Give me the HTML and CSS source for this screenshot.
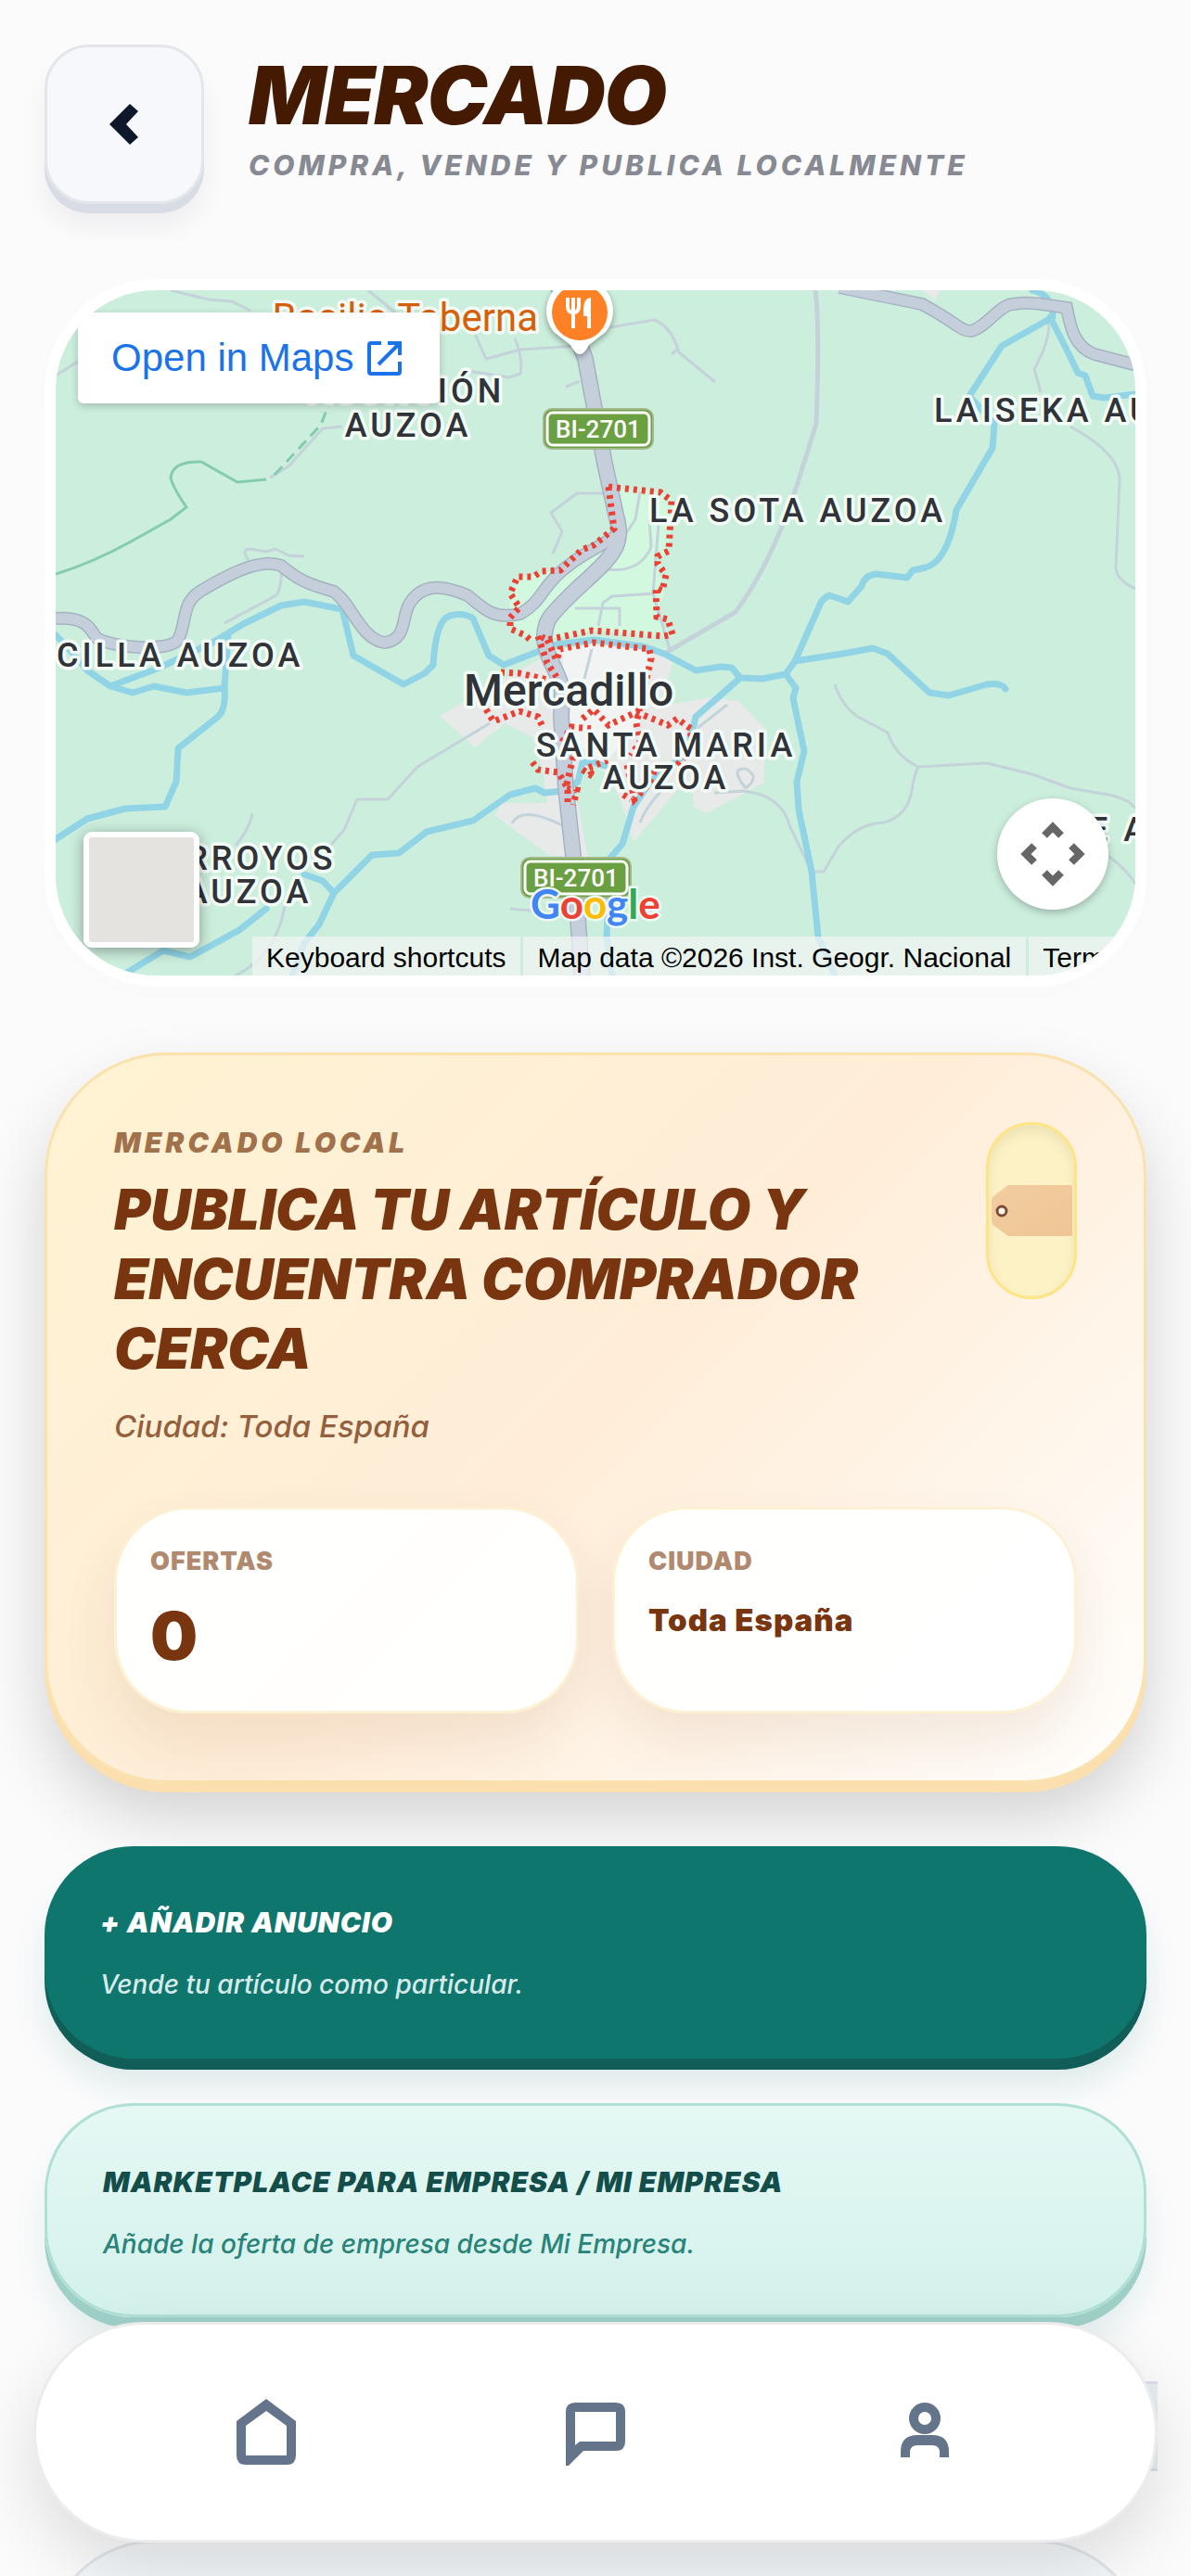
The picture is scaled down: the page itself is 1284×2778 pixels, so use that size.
FILE: index.html
```html
<!DOCTYPE html>
<html lang="es">
<head>
<meta charset="utf-8">
<meta name="viewport" content="width=device-width, initial-scale=1">
<title>Mercado</title>
<link rel="stylesheet" href="styles.css">
</head>
<body>
<div class="page">
  <header class="header">
    <button class="back" type="button" aria-label="Volver">
      <svg width="32" height="46" viewBox="0 0 32 46" aria-hidden="true"><path d="M22 1 31 9 18 23 31 37 22 45 0 23Z"/></svg>
    </button>
    <div class="heading">
      <h1>MERCADO</h1>
      <p>COMPRA, VENDE Y PUBLICA LOCALMENTE</p>
    </div>
  </header>

  <section class="map" aria-label="Mapa">
    <svg class="map-canvas" viewBox="60 313 1164 739" preserveAspectRatio="xMidYMid slice">
      <rect x="0" y="250" width="1400" height="900" fill="#cceedd"/>
      <path fill="#d2f9e0" d="M656 527 712 530 727 540 720 592 708 608 716 640 707 665 725 686 640 680 590 690 570 690 548 668 550 640 562 622 600 615 662 578Z"/>
      <g fill="#e8e9e9">
        <path d="M474 772 530 740 600 700 720 700 726 712 710 762 766 752 796 756 824 784 824 844 762 877 747 870 747 852 730 852 683 908 668 860 640 815 620 850 634 926 592 922 534 880 540 866 590 866 585 830 574 795 545 780 512 806Z"/>
        <path fill="#f2f3f3" d="M606 700 640 695 702 702 698 730 690 780 650 825 620 800 610 760Z"/>
        <path d="M994 313H1013L1008 324Z"/>
      </g>
      <path fill="#cceedd" d="M622 848 640 822 662 850 668 906 634 922Z"/>
      <g class="lane">
        <path d="M184 313 225 323 250 325 270 335M397 313 426 337M512 360 524 387 561 377 622 373M555 365Q564 385 561 403 L549 407 504 400M610 417 625 411"/>
        <path d="M652 532H622L594 553 606 573 596 597M270 607Q258 592 270 592L287 595 297 592 311 599 328 600M303 617Q304 632 298 642 L242 672"/>
        <path d="M369 460 348 462 311 503 291 515M60 405 84 390"/>
        <path d="M658 353 705 345Q724 352 732 380L771 412M732 375 724 382"/>
        <path d="M1131 347Q1131 370 1115 398L1122 423M1154 460Q1209 490 1207 520 L1203 610Q1202 625 1224 635"/>
        <path d="M900 738Q908 762 925 773L957 790Q965 815 990 827L1064 823 1113 835 1154 850 1195 857Q1218 862 1224 872M990 827Q984 840 983 853 978 880 953 887 925 888 904 913L888 940H875L851 890Q843 858 802 853L770 855"/>
        <path d="M528 780 450 827 418 862H385L371 895 356 912M272 877Q270 892 254 912M307 977Q298 1030 254 1052M1195 923Q1215 938 1224 953M550 980 574 982M552 888Q562 868 606 890"/>
        <path d="M690 530 685 560 672 580M700 560 702 590Q690 618 655 614M710 565 704 640 722 700M645 675 650 650 660 643 706 640M620 656H668V675M638 700 630 732M784 760 752 785M804 850Q786 828 804 829 820 838 804 850M716 850Q696 870 690 887"/>
      </g>
      <path class="lane wide" d="M879 313Q884 350 880 457L857 530Q830 610 793 660 L716 705"/>
      <g class="river">
        <path d="M1113 313Q1135 318 1135 342L1080 373 1045 427 1072 457 1070 483 1031 550Q1022 605 998 612L984 615 978 623 945 619Q932 620 929 632 L914 649Q904 645 894 642 886 646 884 652L857 713 847 727 822 732 798 731 789 720 777 719 750 723 716 705 693 697 640 690 600 695 543 717 527 707 510 667Q500 660 485 664 470 668 467 717L458 726 435 738 381 707 369 657 328 649 303 653 262 673 229 693 172 720 119 740"/>
        <path d="M60 685Q75 700 94 723L119 740 143 747 166 740 201 747 242 742M246 687 242 740Q244 765 235 773L192 807 190 843 178 870 135 872 94 883 60 905"/>
        <path d="M857 713 908 705 941 699 957 705 1002 747 1023 750 1064 738Q1080 736 1084 743M847 727 858 742 855 753 867 810 859 843 861 873 875 940 882 1010 900 1052"/>
        <path d="M798 731 773 753 750 773 746 790 738 815 703 840 683 870 671 910 658 925 654 1010 660 1052M652 826 640 822H628L623 843 607 853 587 855 577 850 550 857 527 873 510 885 460 897 430 920 401 922 360 963 344 997 328 1017 315 1052M328 943 348 950 360 963"/>
        <path d="M135 1050 176 1025 205 1032 258 1003 287 980M1132 342 1150 377 1162 402 1170 405 1178 427 1191 429 1224 425"/>
      </g>
      <g>
        <g class="road-edge">
          <path d="M60 667C95 665 98 680 104 688 120 698 180 704 192 690 202 670 195 650 217 637 240 623 262 613 274 610 285 607 295 607 303 610 318 622 325 628 360 638 380 652 388 688 414 693 440 690 432 665 442 650 455 630 475 630 504 642 525 660 535 668 561 662 590 645 580 630 627 600L666 577"/>
          <path d="M905 310 994 328C1030 347 1035 357 1047 357 1065 352 1078 328 1092 328 1110 325 1125 328 1150 332 1154 353 1158 374 1180 382L1230 395"/>
          <path class="main" d="M598 300 631 387 652 500 664 555C674 590 660 600 620 637 590 666 587 670 587 690 590 715 604 725 606 745L605 773 610 850 618 923 628 1060"/>
        </g>
        <g class="road">
          <path d="M60 667C95 665 98 680 104 688 120 698 180 704 192 690 202 670 195 650 217 637 240 623 262 613 274 610 285 607 295 607 303 610 318 622 325 628 360 638 380 652 388 688 414 693 440 690 432 665 442 650 455 630 475 630 504 642 525 660 535 668 561 662 590 645 580 630 627 600L666 577"/>
          <path d="M905 310 994 328C1030 347 1035 357 1047 357 1065 352 1078 328 1092 328 1110 325 1125 328 1150 332 1154 353 1158 374 1180 382L1230 395"/>
          <path class="main" d="M598 300 631 387 652 500 664 555C674 590 660 600 620 637 590 666 587 670 587 690 590 715 604 725 606 745L605 773 610 850 618 923 628 1060"/>
        </g>
      </g>
      <path class="trail" d="M60 619Q100 607 143 583L184 560 201 547Q186 525 184 515 186 497 217 498L256 520 287 517"/>
      <path class="trail" stroke-dasharray="12 7" d="M296 512 346 458 354 437"/>
      <g class="border">
        <path d="M656 525 712 531 724 540 721 594 709 600 709 608 718 620 714 637 707 634 708 665 720 668 725 684 716 686 638 680 590 690 584 687M656 525 662 570 640 588 627 593 604 615 584 616 575 622 558 622 550 640 560 655 550 666 550 678 566 685 574 692"/>
        <path d="M580 686 590 715 600 730M590 690 600 712 604 700 640 693 700 700 702 710 686 780 690 800 680 815M540 725 560 726 590 733M524 765 532 778 560 767 580 773 586 786M606 800 616 784 640 786M574 822 580 830 602 833 612 850 612 868M618 816 610 850 622 852 618 868M628 775 640 765 656 782 686 768 720 782 730 775 745 786 744 810 730 825M628 830 640 838 634 828 655 820M676 825 684 862 700 845 710 820M672 857 680 862"/>
      </g>
      <g class="sign">
        <rect x="586" y="441" width="118" height="43" rx="9"/><rect class="inner" x="590" y="445" width="110" height="35" rx="6"/>
        <text x="599" y="472">BI-2701</text>
        <rect x="562" y="925" width="118" height="43" rx="9"/><rect class="inner" x="566" y="929" width="110" height="35" rx="6"/>
        <text x="575" y="956">BI-2701</text>
      </g>
      <g class="label">
        <text x="439" y="434" text-anchor="middle">ASUNCIÓN</text>
        <text x="440" y="471" text-anchor="middle">AUZOA</text>
        <text x="700" y="563">LA SOTA AUZOA</text>
        <text x="1007" y="455">LAISEKA AUZOA</text>
        <text x="61" y="719">CILLA AUZOA</text>
        <text x="268" y="938" text-anchor="middle">ARROYOS</text>
        <text x="268" y="974" text-anchor="middle">AUZOA</text>
        <text x="1174" y="907">E AUZOA</text>
        <text x="718" y="816" text-anchor="middle">SANTA MARIA</text>
        <text x="718" y="851" text-anchor="middle">AUZOA</text>
        <text class="town" x="500" y="761">Mercadillo</text>
        <text class="place" x="580" y="357" text-anchor="end">Basilio Taberna</text>
      </g>
      <path class="pin" d="M625 382Q620 382 615 372L597 358A36 36 0 1 1 653 358L635 372Q630 382 625 382Z"/>
      <circle cx="625" cy="337" r="30" fill="#ff8126"/>
      <path fill="none" stroke="#fff" stroke-width="4" d="M612 321V330Q612 337 618 337T624 330V321M618 321V354"/>
      <path fill="#fff" d="M637 354H633V341H629V332Q630 321 637 321Z"/>
      <text class="google" x="572" y="991"><tspan fill="#4285f4">G</tspan><tspan fill="#ea4335">o</tspan><tspan fill="#fbbc04">o</tspan><tspan fill="#4285f4">g</tspan><tspan fill="#34a853">l</tspan><tspan fill="#ea4335">e</tspan></text>
    </svg>
    <a class="open-maps" href="#">Open in Maps
      <svg width="37" height="37" viewBox="0 0 37 37" aria-hidden="true"><path d="M15 2H4Q2 2 2 4V33Q2 35 4 35H33Q35 35 35 33V22M22 2H35V15M35 2 12 25"/></svg>
    </a>
    <button class="layer" type="button" aria-label="Capas"></button>
    <button class="pan" type="button" aria-label="Mover el mapa">
      <svg width="72" height="72" viewBox="0 0 72 72" aria-hidden="true"><path d="M27 16 36 7 45 16M27 56 36 65 45 56M16 27 7 36 16 45M56 27 65 36 56 45"/></svg>
    </button>
    <div class="credits"><button type="button">Keyboard shortcuts</button><span>Map data ©2026 Inst. Geogr. Nacional</span><a href="#">Terms</a></div>
  </section>

  <section class="hero">
    <div class="hero-top">
      <div class="hero-text">
        <p class="eyebrow">MERCADO LOCAL</p>
        <h2>PUBLICA TU ARTÍCULO Y ENCUENTRA COMPRADOR CERCA</h2>
        <p class="city">Ciudad: Toda España</p>
      </div>
      <div class="pill">
        <svg width="88" height="56" viewBox="0 0 88 56" aria-hidden="true">
          <defs><linearGradient id="tag" x1="0" y1="0" x2="1" y2="1"><stop offset="0" stop-color="#f2cda1"/><stop offset="1" stop-color="#efc593"/></linearGradient></defs>
          <path fill="url(#tag)" d="M19 0H86Q88 0 88 2V53Q88 55 86 55H19L4 44Q1 42 1 38V17Q1 14 4 11Z"/>
          <circle cx="12" cy="28" r="5" fill="#fff3e2" stroke="#7b4c3a" stroke-width="3"/>
        </svg>
      </div>
    </div>
    <dl class="stats">
      <div><dt>OFERTAS</dt><dd class="big">0</dd></div>
      <div><dt>CIUDAD</dt><dd>Toda España</dd></div>
    </dl>
  </section>

  <div class="actions">
    <button class="action primary" type="button"><strong>+ AÑADIR ANUNCIO</strong><span>Vende tu artículo como particular.</span></button>
    <button class="action soft" type="button"><strong>MARKETPLACE PARA EMPRESA / MI EMPRESA</strong><span>Añade la oferta de empresa desde Mi Empresa.</span></button>
  </div>

  <div class="filters"><div class="filter"></div></div>
  <section class="results"></section>
</div>

<nav class="tabs" aria-label="Principal">
  <a href="#" aria-label="Inicio"><svg width="72" height="72" viewBox="0 0 72 72"><path d="M36 0 68 24V61Q68 71 58 71H14Q4 71 4 61V24ZM36 13 14 29V61H58V29Z"/></svg></a>
  <a href="#" aria-label="Mensajes"><svg width="72" height="72" viewBox="0 0 72 72"><path d="M14 4H58Q68 4 68 14V46Q68 56 58 56H23L7 72H4V14Q4 4 14 4ZM14 14V50L19 46H58V14Z"/></svg></a>
  <a href="#" aria-label="Perfil"><svg width="72" height="72" viewBox="0 0 72 72"><path d="M36 4A17 17 0 1 0 36 38 17 17 0 0 0 36 4ZM36 14A7 7 0 1 1 36 28 7 7 0 0 1 36 14ZM10 63V57Q10 39 28 39H44Q62 39 62 57V63H52V58Q52 50 44 50H28Q20 50 20 58V63Z"/></svg></a>
</nav>
</body>
</html>
```
FILE: styles.css
```css
* { box-sizing: border-box; margin: 0; padding: 0; }

body {
  background: #fbfbfc;
  color: #78350f;
  font-family: Inter, "Liberation Sans", sans-serif;
}

button { border: 0; background: none; font: inherit; color: inherit; text-align: left; }
a { color: inherit; text-decoration: none; }

.page {
  height: 100vh;
  overflow: hidden;
  padding: 48px 48px 0;
}

/* Header */
.header { display: flex; gap: 48px; align-items: flex-start; margin-bottom: 81px; }
.back {
  display: grid;
  place-items: center;
  flex: none;
  width: 172px;
  height: 172px;
  border: 3px solid #e3e6ea;
  border-radius: 48px;
  background: #f6f8fc;
  box-shadow: 0 10px 0 #d8dce4, 0 24px 30px rgba(15, 23, 42, .06);
}
.back svg { fill: #0f172a; }
.heading { padding-top: 10px; font-style: italic; }
h1 { font-size: 87px; line-height: 90px; font-weight: 900; letter-spacing: -1px; color: #451a03; }
.heading p { margin-top: 8px; font-size: 30px; line-height: 45px; font-weight: 800; letter-spacing: 4px; color: #878a92; }

/* Map */
.map {
  position: relative;
  height: 763px;
  margin-bottom: 71px;
  border: 12px solid #fff;
  border-radius: 120px;
  overflow: hidden;
  box-shadow: 0 6px 30px rgba(15, 23, 42, .01);
}
.map-canvas { display: block; width: 100%; height: 100%; }
.lane { fill: none; stroke: #c3d3d9; stroke-width: 3; stroke-linejoin: round; }
.lane.wide { stroke-width: 5; }
.river { fill: none; stroke: #90d4e6; stroke-width: 7; stroke-linejoin: round; stroke-linecap: round; }
.road-edge { fill: none; stroke: #a5b3c1; stroke-width: 14; }
.road-edge .main { stroke-width: 18; }
.road { fill: none; stroke: #c5cfdc; stroke-width: 11; }
.road .main { stroke-width: 15; }
.trail { fill: none; stroke: #84ccae; stroke-width: 3; }
.border { fill: none; stroke: #e94235; stroke-width: 7; stroke-dasharray: 4 5; }
.sign { fill: #6ba042; stroke: #a3b98b; stroke-width: 2; }
.sign .inner { stroke: #fff; stroke-width: 3; }
.sign text { fill: #fff; stroke: none; font: 500 26px Roboto, sans-serif; }
.label {
  fill: #303438;
  stroke: #f3fbf7;
  stroke-width: 7;
  stroke-linejoin: round;
  paint-order: stroke;
  font: 500 36px Roboto, sans-serif;
  letter-spacing: 4px;
}
.label .town { font-size: 48px; letter-spacing: 0; }
.label .place { fill: #d56009; font-size: 42px; font-weight: 400; letter-spacing: 0; }
.pin { fill: #fff; filter: drop-shadow(0 3px 3px rgba(0, 0, 0, .35)); }
.google {
  font: 700 44px Lato, sans-serif;
  stroke: #eef8f4;
  stroke-width: 5;
  paint-order: stroke;
}
.open-maps {
  position: absolute;
  left: 24px;
  top: 24px;
  display: flex;
  align-items: center;
  gap: 15px;
  height: 98px;
  padding: 0 41px 0 36px;
  border-radius: 6px;
  background: #fff;
  color: #1a73e8;
  font: 42px "Liberation Sans", Arial, sans-serif;
  box-shadow: 0 3px 9px rgba(0, 0, 0, .2);
}
.open-maps svg { fill: none; stroke: currentColor; stroke-width: 4; }
.layer {
  position: absolute;
  left: 30px;
  bottom: 30px;
  width: 125px;
  height: 125px;
  border: 6px solid #fff;
  border-radius: 9px;
  background: #e4e3df;
  box-shadow: 0 3px 15px rgba(0, 0, 0, .35);
}
.pan {
  position: absolute;
  right: 29px;
  bottom: 71px;
  display: grid;
  place-items: center;
  width: 120px;
  height: 120px;
  border-radius: 50%;
  background: #fff;
  box-shadow: 0 3px 9px rgba(0, 0, 0, .25);
}
.pan svg { fill: none; stroke: #666; stroke-width: 8; }
.credits {
  position: absolute;
  left: 212px;
  right: 0;
  bottom: 0;
  display: flex;
  gap: 3px;
  height: 42px;
  overflow: hidden;
  color: #000;
  font: 30px/45px "Liberation Sans", Arial, sans-serif;
  white-space: nowrap;
}
.credits > * { flex: none; padding: 0 16px 0 15px; background: rgba(245, 245, 245, .7); }

/* Hero */
.hero {
  padding: 72px;
  border: 3px solid #fbe1ab;
  border-radius: 132px;
  background: linear-gradient(135deg, #fef3d2 0%, #ffedd8 50%, #fffefc 100%);
  box-shadow: 0 10px 0 #fbdfae, 0 36px 70px rgba(0, 0, 0, .17);
}
.hero-top { display: flex; justify-content: space-between; gap: 48px; }
.hero-text { max-width: 860px; font-style: italic; }
.eyebrow { font-size: 30px; line-height: 45px; font-weight: 900; letter-spacing: 4px; color: #a0714b; }
h2 { margin-top: 12px; font-size: 60px; line-height: 75px; font-weight: 900; }
.city { margin-top: 19px; font-size: 33px; line-height: 54px; font-weight: 500; color: #935f3c; }
.pill {
  display: grid;
  place-items: center;
  flex: none;
  width: 98px;
  height: 191px;
  border: 3px solid #fde485;
  border-radius: 49px;
  background: #fcf2c5;
  box-shadow: inset 0 6px 12px rgba(120, 110, 50, .12);
}
.stats { display: grid; grid-template-columns: 1fr 1fr; gap: 36px; margin-top: 60px; }
.stats > div {
  padding: 36px 36px 33px;
  border: 3px solid #fdf1d4;
  border-radius: 80px;
  background: rgba(255, 255, 255, .95);
  box-shadow: 0 30px 60px rgba(120, 53, 15, .09);
}
dt { font-size: 27px; line-height: 40px; font-weight: 900; letter-spacing: 1px; color: #b0896f; }
dd { margin-top: 12px; font-size: 33px; line-height: 63px; font-weight: 900; letter-spacing: 1px; }
dd.big { font-size: 72px; line-height: 96px; }

/* Actions */
.actions { display: grid; gap: 48px; margin-top: 68px; }
.action {
  display: grid;
  justify-items: start;
  gap: 24px;
  padding: 60px;
  border-radius: 96px;
  font-style: italic;
}
.action strong { font-size: 30px; line-height: 45px; font-weight: 900; letter-spacing: 1px; }
.action span { font-size: 28px; line-height: 40px; font-weight: 500; }
.primary {
  background: #0f766e;
  color: #fff;
  box-shadow: 0 12px 0 #115e59, 0 30px 36px rgba(15, 118, 110, .12);
}
.primary span { color: #d6ebe9; }
.soft {
  padding-bottom: 56px;
  border: 3px solid #afdfd5;
  background: linear-gradient(#e5f8f4, #d4f1eb);
  color: #134e4a;
  box-shadow: 0 12px 0 #9fd0c8, 0 30px 36px rgba(15, 118, 110, .1);
}
.soft span { color: #298379; }

.filters { margin: 69px -12px 0 0; }
.filter { height: 97px; border: solid #d9e0e6; border-width: 3px 0; background: #e9eef3; margin-left: 60%; }
.results { height: 300px; margin-top: 74px; border: 3px solid #e1e5e9; border-radius: 120px; background: #f4f7f9; }

/* Bottom tabs */
.tabs {
  position: fixed;
  left: 36px;
  right: 36px;
  bottom: 36px;
  display: grid;
  grid-template-columns: repeat(3, 1fr);
  height: 238px;
  padding: 0 70px;
  border: 3px solid #ececed;
  border-radius: 119px;
  background: #fff;
  box-shadow: 0 30px 72px rgba(0, 0, 0, .12);
}
.tabs a { display: grid; place-items: center; }
.tabs svg { fill: #64748b; fill-rule: evenodd; }
```
